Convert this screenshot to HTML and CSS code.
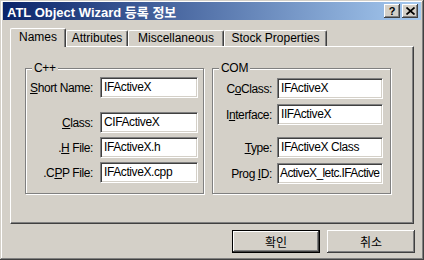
FILE: index.html
```html
<!DOCTYPE html>
<html lang="ko">
<head>
<meta charset="utf-8">
<title>ATL Object Wizard 등록 정보</title>
<link rel="stylesheet" href="styles.css">
</head>
<body>
<div class="window">
  <div class="titlebar">
    <span class="title">ATL Object Wizard 등록 정보</span>
    <div class="tbtns">
      <span class="tbtn help">?</span>
      <span class="tbtn close"><svg width="9" height="8" viewBox="0 0 9 8"><path d="M0.5 0.5 L8.5 7.5 M8.5 0.5 L0.5 7.5" stroke="#000" stroke-width="1.7" fill="none"/></svg></span>
    </div>
  </div>
  <div class="tabs">
    <div class="tab sel w-names">Names</div>
    <div class="tab w-attr">Attributes</div>
    <div class="tab w-misc">Miscellaneous</div>
    <div class="tab w-stock">Stock Properties</div>
  </div>
  <div class="panel">
    <div class="group g-cpp">
      <span class="legend">C++</span>
      <div class="row"><label><u>S</u>hort Name:</label><div class="edit">IFActiveX</div></div>
      <div class="row m14"><label><u>C</u>lass:</label><div class="edit">CIFActiveX</div></div>
      <div class="row m4"><label>.<u>H</u> File:</label><div class="edit">IFActiveX.h</div></div>
      <div class="row m4"><label>.C<u>P</u>P File:</label><div class="edit">IFActiveX.cpp</div></div>
    </div>
    <div class="group g-com">
      <span class="legend">COM</span>
      <div class="row"><label>C<u>o</u>Class:</label><div class="edit">IFActiveX</div></div>
      <div class="row m5"><label>I<u>n</u>terface:</label><div class="edit">IIFActiveX</div></div>
      <div class="row m12"><label><u>T</u>ype:</label><div class="edit">IFActiveX Class</div></div>
      <div class="row m5"><label>Prog <u>I</u>D:</label><div class="edit tight">ActiveX_letc.IFActive</div></div>
    </div>
  </div>
  <div class="buttons">
    <button class="btn default">확인</button>
    <button class="btn">취소</button>
  </div>
</div>
</body>
</html>
```
FILE: styles.css
```css
html, body {
  margin: 0;
  padding: 0;
  background: #d4d0c8;
}

.window {
  width: 424px;
  height: 260px;
  box-sizing: border-box;
  padding: 2px 3px 3px 3px;
  background: #d4d0c8;
  box-shadow: inset -1px -1px #404040, inset 1px 1px #d4d0c8, inset -2px -2px #808080, inset 2px 2px #ffffff;
  display: flex;
  flex-direction: column;
  font-family: "Liberation Sans", "Noto Sans CJK KR", sans-serif;
  color: #000;
}

.titlebar {
  height: 18px;
  display: flex;
  align-items: center;
  justify-content: space-between;
  padding-left: 4px;
  background: linear-gradient(to right, #0a246a, #a6caf0);
}

.title {
  color: #fff;
  font-weight: bold;
  font-size: 13px;
  white-space: nowrap;
}

.tbtns {
  display: flex;
  gap: 2px;
  margin-right: 3px;
}

.tbtn {
  width: 16px;
  height: 14px;
  box-sizing: border-box;
  background: #d4d0c8;
  box-shadow: inset -1px -1px #404040, inset 1px 1px #ffffff, inset -2px -2px #808080, inset 2px 2px #d4d0c8;
  display: flex;
  align-items: center;
  justify-content: center;
}

.help {
  font-weight: bold;
  font-size: 11px;
  line-height: 14px;
}

.close svg {
  display: block;
}

.tabs {
  display: flex;
  align-items: flex-end;
  height: 18px;
  margin-top: 8px;
  margin-left: 7px;
}

.tab {
  box-sizing: border-box;
  height: 16px;
  border-top: 1px solid #ffffff;
  border-left: 1px solid #ffffff;
  border-right: 1px solid #404040;
  box-shadow: inset -1px 0 #808080;
  border-radius: 2px 2px 0 0;
  font-size: 12px;
  line-height: 15px;
  text-align: center;
  white-space: nowrap;
  background: #d4d0c8;
}

.tab.sel {
  height: 19px;
  margin-bottom: -1px;
  position: relative;
  z-index: 1;
  line-height: 17px;
}

.w-names { width: 56px; }
.w-attr { width: 62px; }
.w-misc { width: 96px; }
.w-stock { width: 103px; }

.panel {
  box-sizing: border-box;
  width: 404px;
  height: 178px;
  margin-left: 7px;
  border-top: 1px solid #ffffff;
  border-left: 1px solid #ffffff;
  border-right: 1px solid #404040;
  border-bottom: 1px solid #404040;
  box-shadow: inset -1px -1px #808080;
  padding: 21px 0 0 14px;
  display: flex;
  gap: 8px;
  align-items: flex-start;
}

.group {
  position: relative;
  box-sizing: border-box;
  width: 179px;
  height: 126px;
  border: 1px solid #808080;
  box-shadow: inset 1px 1px #ffffff, 1px 1px #ffffff;
  display: flex;
  flex-direction: column;
}

.legend {
  position: absolute;
  top: -8px;
  left: 6px;
  padding: 0 2px;
  background: #d4d0c8;
  font-size: 12px;
  line-height: 14px;
  letter-spacing: -0.3px;
}

.row {
  display: flex;
  align-items: center;
  height: 21px;
}

.g-cpp .row:first-of-type { margin-top: 8px; }
.g-com .row:first-of-type { margin-top: 9px; }

.m4 { margin-top: 4px; }
.m5 { margin-top: 5px; }
.m12 { margin-top: 12px; }
.m14 { margin-top: 14px; }

.row label {
  font-size: 12px;
  letter-spacing: -0.4px;
  text-align: right;
  white-space: nowrap;
}

.g-cpp label { width: 67px; margin-right: 7px; }
.g-cpp .edit { width: 98px; }
.g-com label { width: 59px; margin-right: 5px; }
.g-com .edit { width: 106px; }

.edit {
  box-sizing: border-box;
  height: 21px;
  background: #ffffff;
  border-top: 1px solid #808080;
  border-left: 1px solid #808080;
  border-right: 1px solid #ffffff;
  border-bottom: 1px solid #ffffff;
  box-shadow: inset 1px 1px #404040, inset -1px -1px #d4d0c8;
  padding: 0 2px 0 3px;
  font-size: 12px;
  letter-spacing: -0.4px;
  line-height: 19px;
  white-space: nowrap;
  overflow: hidden;
}

.edit.tight {
  padding: 0 1px 0 2px;
  letter-spacing: -0.6px;
}

.buttons {
  display: flex;
  justify-content: flex-end;
  gap: 7px;
  margin-top: 6px;
  padding-right: 6px;
}

.btn {
  box-sizing: border-box;
  width: 88px;
  height: 23px;
  padding: 0;
  margin: 0;
  border: none;
  background: #d4d0c8;
  box-shadow: inset -1px -1px #404040, inset 1px 1px #ffffff, inset -2px -2px #808080, inset 2px 2px #d4d0c8;
  font-family: "Noto Sans CJK KR", "Liberation Sans", sans-serif;
  font-size: 12px;
  color: #000;
}

.btn.default {
  border: 1px solid #000000;
  box-shadow: inset -1px -1px #404040, inset 1px 1px #ffffff, inset -2px -2px #808080;
}
```
